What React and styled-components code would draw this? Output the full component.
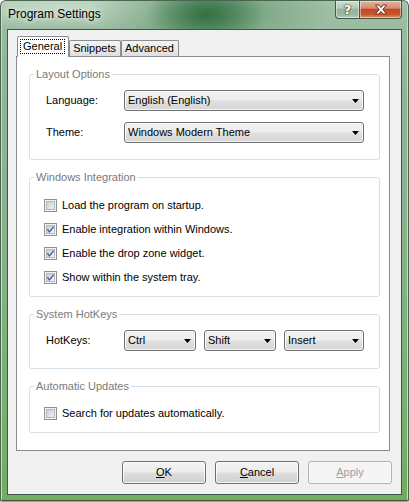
import React from 'react';
import styled, { createGlobalStyle } from 'styled-components';

const Global = createGlobalStyle`
  html, body { margin: 0; padding: 0; background: #ffffff; }
  body { font-family: "Liberation Sans", Arial, sans-serif; font-size: 11px; color: #000; }
  * { box-sizing: border-box; }
`;

const Window = styled.div`
  width: 409px;
  height: 502px;
  display: flex;
  flex-direction: column;
  border: 1px solid #4a6650;
  border-bottom: 1px solid #34c6ec;
  border-radius: 6px 6px 2px 2px;
  padding: 0 6px 6px 6px;
  overflow: hidden;
  box-shadow: inset 0 -1px 0 #3b5a42, inset 1px 0 0 #c9dccb, inset -1px 0 0 #c9dccb;
  background:
    radial-gradient(ellipse 60px 34px at 205px 14px, rgba(44, 108, 60, 0.9), rgba(44, 108, 60, 0) 100%),
    radial-gradient(ellipse 120px 40px at 210px 10px, rgba(60, 120, 72, 0.55), rgba(60, 120, 72, 0) 100%),
    radial-gradient(ellipse 160px 26px at 60px 4px, rgba(214, 230, 216, 0.65), rgba(214, 230, 216, 0) 100%),
    linear-gradient(180deg, #a2c1a8 0px, #90b698 60px, #86b28b 240px, #71ad60 502px);
`;

const TitleBar = styled.div`
  height: 28px;
  flex: none;
  display: flex;
  justify-content: space-between;
  align-items: flex-start;
`;

const Title = styled.div`
  margin: 6px 0 0 1px;
  font-size: 12px;
  line-height: 14px;
  color: #000;
  text-shadow: 0 0 6px rgba(255, 255, 255, 0.9), 0 0 10px rgba(255, 255, 255, 0.6);
`;

const CaptionButtons = styled.div`
  display: flex;
`;

const CaptionButton = styled.div`
  width: ${p => p.$w}px;
  height: 18px;
  border: 1px solid #3f5a45;
  border-top: none;
  ${p => (p.$close ? 'border-left: none;' : '')}
  border-radius: ${p => (p.$close ? '0 0 4px 0' : '0 0 0 4px')};
  display: flex;
  align-items: center;
  justify-content: center;
  box-shadow: inset 0 0 0 1px rgba(255, 255, 255, 0.45);
  background: ${p =>
    p.$close
      ? 'linear-gradient(180deg, #e7b2a0 0%, #d88a70 42%, #bf4a26 50%, #c9572e 80%, #e09a6a 100%)'
      : 'linear-gradient(180deg, #cfdfd2 0%, #b3cab7 42%, #93b299 50%, #9cbaa1 80%, #b6cdb9 100%)'};
`;

const HelpGlyph = styled.span`
  font-family: "DejaVu Sans", sans-serif;
  font-weight: bold;
  font-size: 13px;
  line-height: 13px;
  color: #ffffff;
  text-shadow: 0 0 1px #2f4535, 0 0 1px #2f4535, 0 0 2px #2f4535;
`;

const Client = styled.div`
  flex: 1;
  display: flex;
  flex-direction: column;
  border: 1px solid #3f5746;
  background: #f0f0f0;
  padding: 6px 11px 10px 8px;
`;

const TabStrip = styled.div`
  height: 20px;
  flex: none;
  display: flex;
  align-items: flex-end;
  padding-left: 1px;
`;

const Tab = styled.div`
  height: ${p => (p.$active ? 21 : 16)}px;
  margin-bottom: ${p => (p.$active ? -1 : 0)}px;
  position: relative;
  z-index: ${p => (p.$active ? 2 : 1)};
  border: 1px solid #898c95;
  border-bottom: none;
  border-radius: 2px 2px 0 0;
  padding: ${p => (p.$active ? '2px 3px 0 2px' : '0 4px 0 3px')};
  display: flex;
  align-items: ${p => (p.$active ? 'flex-start' : 'center')};
  line-height: 13px;
  background: ${p =>
    p.$active ? '#ffffff' : 'linear-gradient(180deg, #f4f4f4 0%, #ebebeb 50%, #dedede 100%)'};
  color: #000;
`;

const FocusText = styled.span`
  border: 1px dotted #000;
  padding: 0 2px;
  line-height: 13px;
`;

const Panel = styled.div`
  flex: 1;
  display: flex;
  flex-direction: column;
  gap: 10px;
  background: #ffffff;
  border: 1px solid #898c95;
  padding: 10px 9px 0 12px;
`;

const Group = styled.fieldset`
  margin: 0;
  min-width: 0;
  border: 1px solid #d5dfe5;
  border-radius: 3px;
  padding: ${p => p.$pt}px 15px ${p => p.$pb}px 0;
`;

const Legend = styled.legend`
  margin-left: 4px;
  padding: 0 2px;
  font-size: 11px;
  line-height: 14px;
  color: #7b7b7b;
`;

const FormGrid = styled.div`
  display: grid;
  grid-template-columns: 78px 1fr;
  row-gap: 11px;
  align-items: center;
  padding-left: 16px;
`;

const Label = styled.span`
  line-height: 13px;
`;

const ComboRow = styled.div`
  display: flex;
  gap: 8px;
`;

const ComboBox = styled.div`
  width: ${p => (p.$w ? `${p.$w}px` : '100%')};
  height: 21px;
  border: 1px solid #707070;
  border-radius: 3px;
  padding: 0 4px 0 3px;
  display: flex;
  align-items: center;
  justify-content: space-between;
  background: linear-gradient(180deg, #f3f3f3 0%, #ececec 48%, #e0e0e0 52%, #d6d6d6 100%);
  box-shadow: inset 0 0 0 1px rgba(255, 255, 255, 0.75);
  line-height: 13px;
`;

const CheckList = styled.div`
  display: flex;
  flex-direction: column;
  gap: 11px;
  padding-left: 14px;
`;

const CheckRow = styled.label`
  display: flex;
  align-items: center;
  gap: 5px;
  height: 13px;
  line-height: 13px;
`;

const ButtonRow = styled.div`
  flex: none;
  display: flex;
  justify-content: flex-end;
  gap: 9px;
  margin: 10px -2px 0 0;
`;

const Button = styled.div`
  width: 84px;
  height: 23px;
  border: 1px solid ${p => (p.$disabled ? '#adb2b5' : '#707070')};
  border-radius: 3px;
  display: flex;
  align-items: center;
  justify-content: center;
  line-height: 13px;
  color: ${p => (p.$disabled ? '#a0a0a0' : '#000')};
  background: ${p =>
    p.$disabled
      ? '#f4f4f4'
      : 'linear-gradient(180deg, #f3f3f3 0%, #ececec 48%, #dddddd 52%, #d0d0d0 100%)'};
  box-shadow: inset 0 0 0 1px ${p => (p.$disabled ? 'rgba(255,255,255,0.5)' : 'rgba(255,255,255,0.8)')};
`;

const Arrow = () => (
  <svg width="7" height="4" viewBox="0 0 7 4" aria-hidden="true">
    <path d="M0 0H7L3.5 4Z" fill="#000" />
  </svg>
);

const CloseGlyph = () => (
  <svg width="14" height="11" viewBox="0 0 14 11" aria-hidden="true">
    <path
      d="M1.5 1 H4.8 L7 3.6 L9.2 1 H12.5 L8.8 5.5 L12.5 10 H9.2 L7 7.4 L4.8 10 H1.5 L5.2 5.5 Z"
      fill="#ffffff"
      stroke="#5a2a1c"
      strokeWidth="0.9"
      strokeLinejoin="round"
    />
  </svg>
);

const CheckBox = ({ checked }) => (
  <svg width="13" height="13" viewBox="0 0 13 13" aria-hidden="true">
    <defs>
      <linearGradient id="cbfill" x1="0" y1="0" x2="1" y2="1">
        <stop offset="0" stopColor="#c8ccd2" />
        <stop offset="1" stopColor="#f5f5f5" />
      </linearGradient>
    </defs>
    <rect x="0.5" y="0.5" width="12" height="12" fill="#f4f4f4" stroke="#8e8f8f" />
    <rect x="2.5" y="2.5" width="8" height="8" fill="url(#cbfill)" stroke="#b4b8bd" />
    {checked && (
      <path d="M3.4 6.2 L5.5 8.9 L9.6 3.6" fill="none" stroke="#4c64ad" strokeWidth="1.5" />
    )}
  </svg>
);

const Check = ({ checked, children }) => (
  <CheckRow>
    <CheckBox checked={checked} />
    <span>{children}</span>
  </CheckRow>
);

export default function App() {
  return (
    <>
      <Global />
      <Window>
        <TitleBar>
          <Title>Program Settings</Title>
          <CaptionButtons>
            <CaptionButton $w={25}>
              <HelpGlyph>?</HelpGlyph>
            </CaptionButton>
            <CaptionButton $w={42} $close>
              <CloseGlyph />
            </CaptionButton>
          </CaptionButtons>
        </TitleBar>
        <Client>
          <TabStrip>
            <Tab $active>
              <FocusText>General</FocusText>
            </Tab>
            <Tab>Snippets</Tab>
            <Tab>Advanced</Tab>
          </TabStrip>
          <Panel>
            <Group $pt={9} $pb={16}>
              <Legend>Layout Options</Legend>
              <FormGrid>
                <Label>Language:</Label>
                <ComboBox>
                  <span>English (English)</span>
                  <Arrow />
                </ComboBox>
                <Label>Theme:</Label>
                <ComboBox>
                  <span>Windows Modern Theme</span>
                  <Arrow />
                </ComboBox>
              </FormGrid>
            </Group>
            <Group $pt={15} $pb={12}>
              <Legend>Windows Integration</Legend>
              <CheckList>
                <Check>Load the program on startup.</Check>
                <Check checked>Enable integration within Windows.</Check>
                <Check checked>Enable the drop zone widget.</Check>
                <Check checked>Show within the system tray.</Check>
              </CheckList>
            </Group>
            <Group $pt={9} $pb={17}>
              <Legend>System HotKeys</Legend>
              <FormGrid>
                <Label>HotKeys:</Label>
                <ComboRow>
                  <ComboBox $w={72}>
                    <span>Ctrl</span>
                    <Arrow />
                  </ComboBox>
                  <ComboBox $w={72}>
                    <span>Shift</span>
                    <Arrow />
                  </ComboBox>
                  <ComboBox $w={80}>
                    <span>Insert</span>
                    <Arrow />
                  </ComboBox>
                </ComboRow>
              </FormGrid>
            </Group>
            <Group $pt={14} $pb={12}>
              <Legend>Automatic Updates</Legend>
              <CheckList>
                <Check>Search for updates automatically.</Check>
              </CheckList>
            </Group>
          </Panel>
          <ButtonRow>
            <Button>
              <span><u>O</u>K</span>
            </Button>
            <Button>
              <span><u>C</u>ancel</span>
            </Button>
            <Button $disabled>
              <span><u>A</u>pply</span>
            </Button>
          </ButtonRow>
        </Client>
      </Window>
    </>
  );
}
